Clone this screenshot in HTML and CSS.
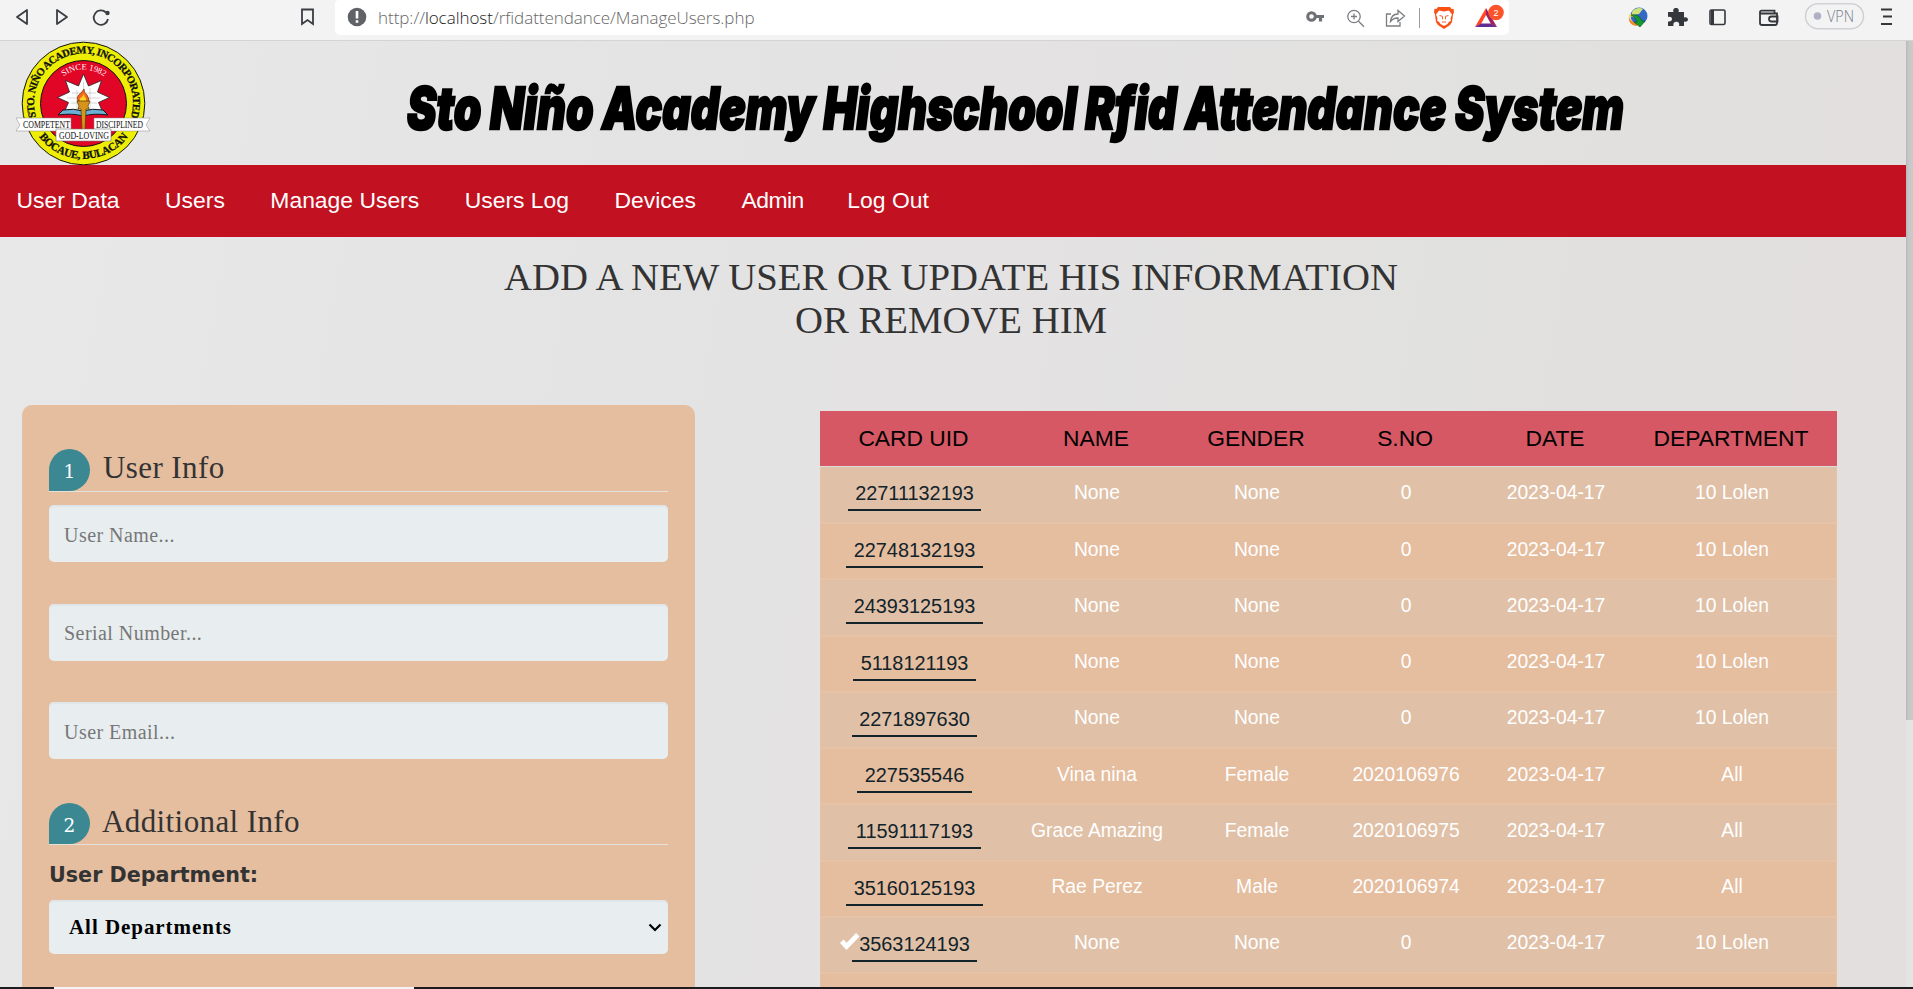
FILE: index.html
```html
<!DOCTYPE html>
<html lang="en">
<head>
<meta charset="utf-8">
<title>Manage Users</title>
<link rel="stylesheet" href="styles.css">
</head>
<body>
<div class="window">
  <div class="toolbar">
    <div class="nav-icons">
      <svg width="110" height="34" viewBox="0 0 110 34" fill="none" stroke="#3a3d42" stroke-width="1.8" stroke-linejoin="round">
        <path d="M27 10v14L17 17z"/><path d="M57 10v14l10-7z"/>
        <path d="M106 12.5A7.2 7.2 0 1 0 108 19"/><circle cx="107.5" cy="13" r="2.2" fill="#3a3d42" stroke="none"/>
      </svg>
      <svg class="bookmark" width="15" height="18" viewBox="0 0 15 18" fill="none" stroke="#3a3d42" stroke-width="1.8"><path d="M2 1.5h11v14.5l-5.500-4-5.500 4z"/></svg>
    </div>
    <div class="urlbar">
      <svg class="info" width="20" height="20" viewBox="0 0 20 20"><circle cx="10" cy="10" r="9.300" fill="#5f6368"/><path d="M8.700 4h2.600v7.500H8.700zM8.700 13.200h2.600v2.500H8.700z" fill="#fff"/></svg>
      <span class="url">http://<b>localhost</b>/rfidattendance/ManageUsers.php</span>
      <svg class="url-icons" width="206" height="34" viewBox="1303 0 206 34" fill="none">
        <g stroke="#6e7175"><circle cx="1311.500" cy="16.500" r="3.800" stroke-width="3"/><path d="M1315 16.500h9M1320.500 17v4.500" stroke-width="3.200"/></g>
        <g stroke="#7b7d80" stroke-width="1.300"><circle cx="1354" cy="16.500" r="6.200"/><path d="M1358.500 21.200l5.500 5.500M1351 16.500h6M1354 13.500v6"/>
        <path d="M1391 14h-4.500v12h13.500v-4M1390.500 21.500c.5-5 3-7.500 7.500-7.500v-3.500l6.500 5.500-6.500 5.500V18c-3.500-.2-5.500 1-7.500 3.500z"/></g>
        <path d="M1419.500 8v20" stroke="#9a9c9e"/>
        <path d="M1438 7h12l1.500 2 2-.2.500 3.500-1 2.200-1 7.500-2 3-6 4-6-4-2-3-1-7.500-1-2.200.500-3.500 2 .2z" fill="#fb4f13"/>
        <path d="M1439 10.500l5 1 5-1 3 4-1.500 4 .5 2-2.500 2-1 1.500-3.500 2-3.500-2-1-1.500-2.500-2 .5-2-1.500-4z" fill="#fff"/>
        <path d="M1439.500 15.500l3 .8v3M1448.500 15.500l-3 .8v3M1442 22h4" stroke="#fb4f13" stroke-width=".9"/>
        <path d="M1486 8l-11 19 6-3 5-9z" fill="#ff4724"/><path d="M1475 27h22l-6-3.500h-10z" fill="#662d91"/><path d="M1486 8l11 19-6-3-5-9z" fill="#9e1f63"/>
        <circle cx="1496" cy="12.500" r="7.800" fill="#fb542b"/><text x="1496" y="16" class="badge-text">2</text>
      </svg>
    </div>
    <svg class="ext-icons" width="285" height="34" viewBox="1622 0 285 34" fill="none">
      <circle cx="1639" cy="16" r="8.500" fill="#3568c4"/><path d="M1632 12c2-4 8-5 11-3l-4 5-7 1z" fill="#cfe37a"/><path d="M1629 17c2 4 5 6 9 7l-1 2c-5 0-9-4-8-9z" fill="#f08a1c"/><path d="M1629 15c4-2 8 1 9 5l-2-1c-2-3-4-3-7-2z" fill="#f4e23a"/><path d="M1631 15c3 1 5 4 6 7h-3l6 5 5-6h-3c-2-5-6-7-11-6z" fill="#119c31" stroke="#174a1d" stroke-width=".6"/>
      <path d="M1668 12h5.500c-1-2.500.5-4 2.500-4s3.500 1.500 2.500 4h5.500v5.500c2.500-1 4 .5 4 2s-1.500 3-4 2V26h-5c1-2.800-.8-4.200-2.700-4.200s-3.500 1.400-2.800 4.200H1668v-4.500c2.500.5 4-1 4-2.500s-1.500-2.500-4-2z" fill="#34373b"/>
      <rect x="1710" y="10" width="15" height="14.500" rx="1.500" stroke="#34373b" stroke-width="1.600"/><path d="M1711 10h3v14h-3z" fill="#34373b"/>
      <path d="M1760 12v11q0 2 2 2h13q2 0 2-2v-9.500h-15q-2 0-2-1.500t2-1.300h12.500v2.500M1777.500 16.500h-6q-2.500 0-2.500 2.500t2.500 2.500h6z" stroke="#34373b" stroke-width="1.800"/>
      <rect x="1805.500" y="3.700" width="58" height="25" rx="12.500" stroke="#d0d1d5" stroke-width="1.500"/><circle cx="1817.500" cy="16" r="3.800" fill="#afb0c6"/>
      <text x="1827" y="21.500" class="vpn" textLength="27" lengthAdjust="spacingAndGlyphs">VPN</text>
      <path d="M1881 9.500h11M1883 16.500h9M1881 24h11" stroke="#34373b" stroke-width="1.800"/>
    </svg>
  </div>

  <div class="viewport">
    <div class="page">
      <header class="masthead">
        <svg class="seal" width="136" height="124" viewBox="16 41 136 124">
          <defs>
            <path id="arc-top" d="M42 130A49.500 49.500 0 1 1 125 130"/>
            <path id="arc-bottom" d="M34 129A56 56 0 0 0 133 129"/>
            <path id="arc-in" d="M59 80Q83 59 109 80"/>
          </defs>
          <circle cx="83.500" cy="103.500" r="61.300" fill="#eeee05" stroke="#111" stroke-width="1"/>
          <circle cx="83.500" cy="103.500" r="43" fill="#e20626" stroke="#111" stroke-width="1"/>
          <text class="seal-ring top"><textPath href="#arc-top" startOffset="50%">STO. NIÑO ACADEMY, INCORPORATED</textPath></text>
          <text class="seal-ring"><textPath href="#arc-bottom" startOffset="50%">BOCAUE, BULACAN</textPath></text>
          <text class="seal-since"><textPath href="#arc-in" startOffset="50%">SINCE 1982</textPath></text>
          <path d="M83.500 74l5 12 13-5.500-4 11.500 12 5.500-11 5 4 9-38 0 4-9-11-5 12-5.500-4-11.500 13 5.500z" fill="#fff" stroke="#222" stroke-width=".8"/>
          <path d="M77 90v21M90 88v23M67 98h33M72 93h24M71 103h26M83.500 82v10" stroke="#aaa" stroke-width=".5"/>
          <path d="M58 115l5-5q11-2 20 1 9-3 20-1l5 5q-14-2-25 1-11-3-25-1z" fill="#69afd6" stroke="#161616" stroke-width="1"/>
          <path d="M78 101q-2-5 3-8l3-4q0 4 3 6 3 4 1 8z" fill="#f26a15" stroke="#75240b" stroke-width=".7"/><path d="M80 101q-1-3 2-4l2-3q0 3 2 4v3z" fill="#ffd228"/>
          <path d="M77 101h13l-2 5 1 3h-3l-1 21h-3l-1-21h-3l1-3z" fill="#d69518" stroke="#513706" stroke-width=".7"/>
          <path d="M16 118h55v13H16l4-6zM150 118H94v13h56l-4-6z" fill="#fff" stroke="#8a8a8a" stroke-width=".5"/>
          <path d="M56 129h55v12H56z" fill="#fff" stroke="#777" stroke-width=".6"/>
          <text x="23" y="128" class="seal-ribbon" textLength="47" lengthAdjust="spacingAndGlyphs">COMPETENT</text>
          <text x="96" y="128" class="seal-ribbon" textLength="47" lengthAdjust="spacingAndGlyphs">DISCIPLINED</text>
          <text x="59" y="139" class="seal-ribbon" textLength="50" lengthAdjust="spacingAndGlyphs">GOD-LOVING</text>
        </svg>
        <svg class="banner" width="1240" height="95" viewBox="395 60 1240 95">
          <text class="banner-text" x="407" y="129" textLength="1217" lengthAdjust="spacingAndGlyphs">Sto Niño Academy Highschool Rfid Attendance System</text>
        </svg>
      </header>
      <nav class="menu"><a>User Data</a><a>Users</a><a>Manage Users</a><a>Users Log</a><a>Devices</a><a class="tight">Admin</a><a>Log Out</a></nav>
      <h1 class="heading">ADD A NEW USER OR UPDATE HIS INFORMATION<br>OR REMOVE HIM</h1>
      <main class="content">
        <form class="card">
          <div class="legend"><span class="num">1</span>User Info</div>
          <input class="field" placeholder="User Name...">
          <input class="field" placeholder="Serial Number...">
          <input class="field" placeholder="User Email...">
          <div class="legend second"><span class="num">2</span>Additional Info</div>
          <label class="label">User Department:</label>
          <div class="select"><span>All Departments</span>
            <svg width="14" height="10" viewBox="0 0 14 10" fill="none" stroke="#000" stroke-width="2.200"><path d="M1.500 1.500l5.500 5.500 5.500-5.500"/></svg>
          </div>
        </form>
        <section class="table">
          <div class="row head"><span>CARD UID</span><span>NAME</span><span>GENDER</span><span>S.NO</span><span>DATE</span><span>DEPARTMENT</span></div>
          <div class="row first"><span class="uid"><b>22711132193</b></span><span>None</span><span>None</span><span>0</span><span>2023-04-17</span><span>10 Lolen</span></div>
          <div class="row"><span class="uid"><b>22748132193</b></span><span>None</span><span>None</span><span>0</span><span>2023-04-17</span><span>10 Lolen</span></div>
          <div class="row"><span class="uid"><b>24393125193</b></span><span>None</span><span>None</span><span>0</span><span>2023-04-17</span><span>10 Lolen</span></div>
          <div class="row"><span class="uid"><b>5118121193</b></span><span>None</span><span>None</span><span>0</span><span>2023-04-17</span><span>10 Lolen</span></div>
          <div class="row"><span class="uid"><b>2271897630</b></span><span>None</span><span>None</span><span>0</span><span>2023-04-17</span><span>10 Lolen</span></div>
          <div class="row"><span class="uid"><b>227535546</b></span><span>Vina nina</span><span>Female</span><span>2020106976</span><span>2023-04-17</span><span>All</span></div>
          <div class="row"><span class="uid"><b>11591117193</b></span><span>Grace Amazing</span><span>Female</span><span>2020106975</span><span>2023-04-17</span><span>All</span></div>
          <div class="row"><span class="uid"><b>35160125193</b></span><span>Rae Perez</span><span>Male</span><span>2020106974</span><span>2023-04-17</span><span>All</span></div>
          <div class="row"><span class="uid"><b><svg class="check" width="20" height="17" viewBox="0 0 20 17"><path d="M0 10l3.500-3.500 3.200 3.200L16 0l3.500 3.500L6.500 17z" fill="#fff"/></svg>3563124193</b></span><span>None</span><span>None</span><span>0</span><span>2023-04-17</span><span>10 Lolen</span></div>
          <div class="row"></div>
        </section>
      </main>
    </div>
    <div class="scrollbar"><div class="thumb"></div></div>
  </div>
  <div class="taskbar"><div class="task"></div></div>
</div>
</body>
</html>
```
FILE: styles.css
```css
* { box-sizing: border-box; }
body { margin: 0; overflow: hidden; font-family: "Liberation Sans", sans-serif; }
.window { height: 989px; display: flex; flex-direction: column; }
.window svg { display: block; flex: none; }

/* browser chrome */
.toolbar { height: 41px; flex: none; display: flex; align-items: flex-start; background: #f3f3f3; border-bottom: 1px solid #d2d4d6; }
.nav-icons { width: 335px; flex: none; display: flex; }
.bookmark { margin: 8px 0 0 190px; }
.urlbar { width: 1174px; height: 35px; flex: none; display: flex; align-items: flex-start; background: #fff; border-radius: 4px 4px 5px 5px; }
.info { margin: 7px 0 0 12px; }
.url { width: 936px; padding-left: 11px; font: 300 17px/36px "Open Sans", sans-serif; letter-spacing: -.04px; color: #666; }
.url b { font-weight: 300; color: #222; }
.ext-icons { margin-left: 113px; }
.badge-text { font: 9px "Liberation Sans", sans-serif; fill: #fff; text-anchor: middle; }
.vpn { font: 300 16px "Open Sans", sans-serif; fill: #767c8c; }

/* page */
.viewport { flex: 1; min-height: 0; display: flex; overflow: hidden; }
.page { width: 1906px; overflow: hidden; background: linear-gradient(100deg, #e8e8e8 0%, #e4e4e4 30%, #e4e2e3 50%, #e1e1df 72%, #e2dfdf 88%, #e2dfde 100%); }
.masthead { height: 124px; display: flex; padding-left: 16px; }
.seal, .banner { overflow: visible; }
.banner { margin: 19px 0 0 243px; }
.banner-text { font: italic 900 58px Inter, sans-serif; fill: #000; stroke: #000; stroke-width: 2.4px; }
.seal-ring { font: bold 11px "Liberation Serif", serif; letter-spacing: -.3px; fill: #111; stroke: #111; stroke-width: .3px; text-anchor: middle; }
.seal-ring.top { font-size: 10.6px; letter-spacing: -.6px; }
.seal-since { font: 8.5px "Liberation Serif", serif; fill: #fff; text-anchor: middle; }
.seal-ribbon { font: 10.5px "Liberation Serif", serif; fill: #111; }
.menu { height: 72px; display: flex; gap: 45.5px; padding-left: 16.5px; background: #c21121; color: #fff; font-size: 22.9px; line-height: 71px; }
.tight { letter-spacing: -.5px; margin-right: -2px; }
.heading { margin: 0; padding: 18px 4px 0 0; height: 168px; text-align: center; font: 400 38.75px/43px "Liberation Serif", serif; color: #333; }
.content { display: flex; align-items: flex-start; padding-left: 22px; }

/* form */
.card { width: 673px; height: 640px; flex: none; padding: 44px 27px 0; background: #e5bd9f; border-radius: 10px; display: flex; flex-direction: column; font-family: "Liberation Serif", serif; color: #333; }
.legend { height: 43px; flex: none; display: flex; align-items: flex-start; gap: 13px; border-bottom: 1px solid #e5e0da; font-size: 31px; line-height: 38px; letter-spacing: .4px; margin-bottom: 13px; }
.legend.second { gap: 12px; height: 42px; margin-top: 2px; margin-bottom: 0; }
.num { width: 41px; height: 42px; border-radius: 50% 50% 50% 0; background: #3b8892; color: #fff; font: 18.5px/45px "DejaVu Serif", serif; text-align: center; }
.second .num { height: 41px; }
.field { height: 57px; flex: none; margin: 0 0 41.6px; padding: 3px 15px 0; border: 0; border-radius: 5px; background: #e8eef0; box-shadow: inset 0 2px 1px #dfe6ea; font: 20px "Liberation Serif", serif; letter-spacing: .45px; }
.field::placeholder { color: #777; opacity: 1; }
.label { height: 55px; font: bold 20.7px/60px "DejaVu Sans", sans-serif; }
.select { height: 54px; flex: none; display: flex; justify-content: space-between; align-items: center; padding: 2px 6px 0 20px; border-radius: 5px; background: #e8eef0; box-shadow: inset 0 2px 1px #dfe6ea; color: #000; font-weight: bold; font-size: 21px; letter-spacing: .95px; }

/* table */
.table { width: 1017px; margin: 6px 0 0 125px; }
.row { height: 56.25px; display: grid; grid-template-columns: 187px 178px 142px 156px 144px 208px; border: solid #e6c3a6; border-width: 0 1px 2px; background: #e5bd9f; color: #fff; font-size: 19.3px; line-height: 22px; text-align: center; }
.row > span { padding-top: 14.5px; }
.row:nth-child(even) { background: #e0c1a8; }
.row.first { height: 57px; }
.row.head { height: 56px; background: #d55864; border: 0; border-bottom: 1px solid #ddd; color: #000; font-size: 22.8px; line-height: 28px; }
.row.head > span { padding-top: 12.5px; }
.row .uid { padding-top: 15px; }
.uid b { position: relative; display: inline-block; padding: 0 7.5px 5px; border-bottom: 2px solid #12232a; color: #12232a; font-weight: 400; font-size: 19.9px; }
.check { position: absolute; left: -12px; top: 0; }

.scrollbar { width: 7px; background: #e4e4e4; }
.thumb { height: 679px; background: linear-gradient(90deg, #b8b8b8, #c8c8c8 40%, #cacaca); }
.taskbar { height: 2px; flex: none; background: #1c1c1e; padding-left: 54px; }
.task { width: 360px; height: 2px; background: #f3f3f3; }
```
